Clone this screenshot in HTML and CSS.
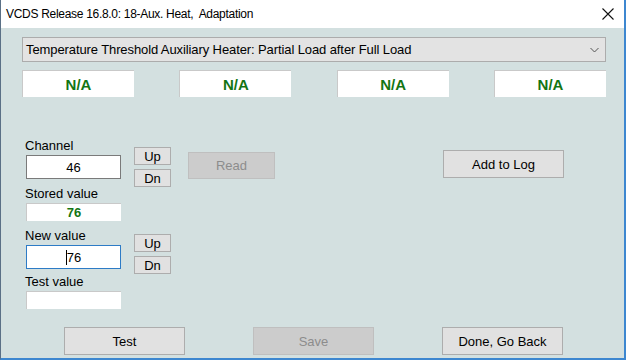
FILE: index.html
```html
<!DOCTYPE html>
<html>
<head>
<meta charset="utf-8">
<link rel="stylesheet" href="styles.css">
</head>
<body>
<div class="window">
  <div class="titlebar">
    <span class="title">VCDS Release 16.8.0: 18-Aux. Heat,&nbsp; Adaptation</span>
    <svg class="close" width="12" height="12" viewBox="0 0 12 12"><path d="M0.5 0.5 L11.5 11.5 M11.5 0.5 L0.5 11.5" stroke="#111" stroke-width="1.1" fill="none"/></svg>
  </div>
  <div class="content">
    <div class="combo">
      <span class="combo-text">Temperature Threshold Auxiliary Heater: Partial Load after Full Load</span>
      <svg class="chev" width="9" height="6" viewBox="0 0 9 6"><path d="M0.5 1 L4.5 5 L8.5 1" stroke="#555" stroke-width="1" fill="none"/></svg>
    </div>
    <div class="na-row">
      <div class="na">N/A</div>
      <div class="na">N/A</div>
      <div class="na">N/A</div>
      <div class="na">N/A</div>
    </div>

    <div class="row row-channel">
      <div class="field">
        <div class="label">Channel</div>
        <div class="input">46</div>
      </div>
      <div class="updn updn-1">
        <div class="btn small">Up</div>
        <div class="btn small">Dn</div>
      </div>
      <div class="btn read disabled">Read</div>
      <div class="btn wide addlog">Add to Log</div>
    </div>

    <div class="field stored">
      <div class="label">Stored value</div>
      <div class="box green">76</div>
    </div>

    <div class="row row-new">
      <div class="field">
        <div class="label">New value</div>
        <div class="input focus"><span class="caret"></span>76</div>
      </div>
      <div class="updn updn-2">
        <div class="btn small">Up</div>
        <div class="btn small">Dn</div>
      </div>
    </div>

    <div class="field testv">
      <div class="label">Test value</div>
      <div class="box"></div>
    </div>

    <div class="bottom">
      <div class="btn wide">Test</div>
      <div class="btn wide disabled">Save</div>
      <div class="btn wide">Done, Go Back</div>
    </div>
  </div>
</div>
</body>
</html>
```

FILE: styles.css
```css
* { box-sizing: border-box; }
html, body { margin: 0; padding: 0; }
body { font-family: "Liberation Sans", Arial, sans-serif; font-size: 12px; color: #000; }

.window {
  width: 626px;
  height: 360px;
  background: #d3e0e0;
  border-left: 1px solid #5a7086;
  border-right: 2px solid #3d87d0;
  border-bottom: 2px solid #3d87d0;
  display: flex;
  flex-direction: column;
}

.titlebar {
  height: 28px;
  background: #fff;
  display: flex;
  align-items: center;
  justify-content: space-between;
  padding: 0 10px 0 5px;
}
.title { font-family: "Liberation Sans", Arial, sans-serif; font-size: 12px; letter-spacing: -0.3px; color: #000; }
.close { display: block; }

.content {
  padding: 9px 18px 0 21px;
  flex: 1;
  display: flex;
  flex-direction: column;
}

.combo {
  height: 25px;
  background: #e3e3e3;
  border: 1px solid #acacac;
  display: flex;
  align-items: center;
  justify-content: space-between;
  padding: 0 6px 0 3px;
  font-size: 13px;
}
.combo-text { letter-spacing: -0.1px; }

.na-row {
  display: flex;
  justify-content: space-between;
  margin-top: 8px;
}
.na {
  width: 112px;
  height: 27px;
  background: #fff;
  border-top: 1px solid #c9c9c9;
  border-left: 1px solid #c9c9c9;
  color: #137513;
  font-weight: bold;
  font-size: 15px;
  display: flex;
  align-items: center;
  justify-content: center;
}

.row { display: flex; align-items: flex-start; }
.row-channel { margin-top: 41px; }

.field { display: flex; flex-direction: column; width: 99px; margin-left: 3px; }
.label { font-size: 13px; line-height: 15px; }
.input {
  height: 24px;
  margin-top: 2px;
  margin-left: 1px;
  width: 95px;
  background: #fff;
  border: 1px solid #7a7a7a;
  display: flex;
  align-items: center;
  justify-content: center;
  font-size: 13px;
}
.input.focus { border-color: #2d7bc6; }
.caret { width: 1px; height: 15px; background: #000; }

.box {
  height: 18px;
  width: 95px;
  margin-left: 1px;
  margin-top: 2px;
  background: #fff;
  border-top: 1px solid #c9c9c9;
  border-left: 1px solid #c9c9c9;
  display: flex;
  align-items: center;
  justify-content: center;
}
.green { color: #137513; font-weight: bold; font-size: 13px; }

.updn { display: flex; flex-direction: column; gap: 4px; margin-left: 10px; }
.updn-1 { margin-top: 9px; }
.updn-2 { margin-top: 6px; }

.btn {
  background: #e1e1e1;
  border: 1px solid #adadad;
  display: flex;
  align-items: center;
  justify-content: center;
  font-size: 13px;
  color: #000;
}
.btn.small { width: 37px; height: 18px; }
.btn.disabled { background: #cccccc; border-color: #bfbfbf; color: #8c8c8c; }
.read { width: 87px; height: 27px; margin-left: 17px; margin-top: 14px; }
.wide { width: 121px; height: 28px; }
.addlog { margin-left: auto; margin-right: 42px; margin-top: 12px; }

.stored { margin-top: -1px; }
.row-new { margin-top: 7px; }
.testv { margin-top: 0; }

.bottom {
  display: flex;
  margin-top: 18px;
  padding-left: 42px;
  gap: 68px;
}
```
